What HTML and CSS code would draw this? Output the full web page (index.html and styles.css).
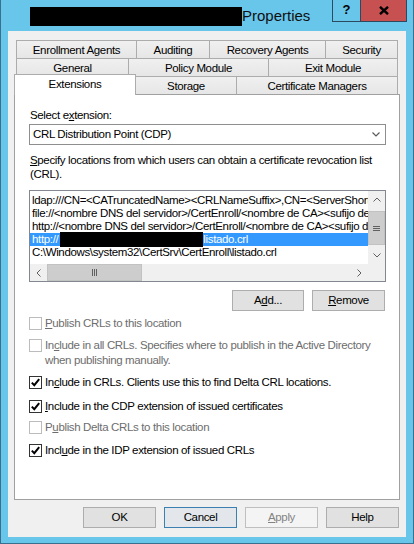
FILE: index.html
```html
<!DOCTYPE html>
<html>
<head>
<meta charset="utf-8">
<title>Properties</title>
<link rel="stylesheet" href="styles.css">
</head>
<body>
<div class="window">
  <div class="titlebar">
    <span class="title-redact"></span>
    <span class="title">Properties</span>
    <div class="caption-btns">
      <div class="cap cap-help">?</div>
      <div class="cap cap-close">
        <svg width="10" height="9" viewBox="0 0 10 9"><path d="M1 0.8 L9 8.2 M9 0.8 L1 8.2" stroke="#000" stroke-width="2.4" fill="none"/></svg>
      </div>
    </div>
  </div>
  <div class="client">
    <div class="tabs">
      <div class="tabrow">
        <div class="tab w121">Enrollment Agents</div>
        <div class="tab w74">Auditing</div>
        <div class="tab w117">Recovery Agents</div>
        <div class="tab w73">Security</div>
      </div>
      <div class="tabrow">
        <div class="tab w113">General</div>
        <div class="tab w141">Policy Module</div>
        <div class="tab w130">Exit Module</div>
      </div>
      <div class="tabrow">
        <div class="tab active w122">Extensions</div>
        <div class="tab w102">Storage</div>
        <div class="tab w162">Certificate Managers</div>
      </div>
    </div>
    <div class="panel">
      <div class="lbl">Select e<u>x</u>tension:</div>
      <div class="combo">
        <span>CRL Distribution Point (CDP)</span>
        <svg class="combo-arrow" width="8" height="5" viewBox="0 0 8 5"><path d="M0.5 0.5 L4 4 L7.5 0.5" stroke="#5a5a5a" stroke-width="1.2" fill="none"/></svg>
      </div>
      <div class="desc"><u>S</u>pecify locations from which users can obtain a certificate revocation list<br>(CRL).</div>
      <div class="listbox">
        <div class="lb-main">
          <div class="lb-rows">
            <div class="lb-row">ldap:///CN=&lt;CATruncatedName&gt;&lt;CRLNameSuffix&gt;,CN=&lt;ServerShortName&gt;,CN=CDP,CN=Public Key Services,CN=Services,&lt;ConfigurationContainer&gt;</div>
            <div class="lb-row">file://&lt;nombre DNS del servidor&gt;/CertEnroll/&lt;nombre de CA&gt;&lt;sufijo de nombre de CRL&gt;&lt;diferencia de CRL&gt;.crl</div>
            <div class="lb-row">http://&lt;nombre DNS del servidor&gt;/CertEnroll/&lt;nombre de CA&gt;&lt;sufijo de nombre de CRL&gt;&lt;diferencia de CRL&gt;.crl</div>
            <div class="lb-row sel">http://<span class="row-redact"></span>listado.crl</div>
            <div class="lb-row">C:\Windows\system32\CertSrv\CertEnroll\listado.crl</div>
          </div>
          <div class="vscroll">
            <div class="sb-btn"><svg width="8" height="5" viewBox="0 0 8 5"><path d="M0.5 4.5 L4 1 L7.5 4.5" stroke="#606060" stroke-width="1" fill="none"/></svg></div>
            <div class="vtrack">
              <div class="vthumb"><svg width="7" height="5" viewBox="0 0 7 5"><path d="M0 0.5 H7 M0 2.5 H7 M0 4.5 H7" stroke="#606060" stroke-width="1"/></svg></div>
            </div>
            <div class="sb-btn"><svg width="8" height="5" viewBox="0 0 8 5"><path d="M0.5 0.5 L4 4 L7.5 0.5" stroke="#606060" stroke-width="1" fill="none"/></svg></div>
          </div>
        </div>
        <div class="hscroll-row">
          <div class="hscroll">
            <div class="sb-btn"><svg width="5" height="8" viewBox="0 0 5 8"><path d="M4.5 0.5 L1 4 L4.5 7.5" stroke="#606060" stroke-width="1" fill="none"/></svg></div>
            <div class="hthumb"><svg width="5" height="7" viewBox="0 0 5 7"><path d="M0.5 0 V7 M2.5 0 V7 M4.5 0 V7" stroke="#606060" stroke-width="1"/></svg></div>
            <div class="htrack"></div>
            <div class="sb-btn"><svg width="5" height="8" viewBox="0 0 5 8"><path d="M0.5 0.5 L4 4 L0.5 7.5" stroke="#606060" stroke-width="1" fill="none"/></svg></div>
          </div>
          <div class="corner"></div>
        </div>
      </div>
      <div class="list-buttons">
        <div class="btn w72">A<u>d</u>d...</div>
        <div class="btn w73"><u>R</u>emove</div>
      </div>
      <div class="chk dis m5"><span class="box"></span><span><u>P</u>ublish CRLs to this location</span></div>
      <div class="chk dis m7"><span class="box"></span><span>In<u>c</u>lude in all CRLs. Specifies where to publish in the Active Directory<br>when publishing manually.</span></div>
      <div class="chk m7"><span class="box"><svg width="11" height="11" viewBox="0 0 11 11"><path d="M1.8 5.6 L4.3 8.2 L9.2 2.2" stroke="#000" stroke-width="2" fill="none"/></svg></span><span>In<u>c</u>lude in CRLs. Clients use this to find Delta CRL locations.</span></div>
      <div class="chk m9"><span class="box"><svg width="11" height="11" viewBox="0 0 11 11"><path d="M1.8 5.6 L4.3 8.2 L9.2 2.2" stroke="#000" stroke-width="2" fill="none"/></svg></span><span><u>I</u>nclude in the CDP extension of issued certificates</span></div>
      <div class="chk dis m6"><span class="box"></span><span>P<u>u</u>blish Delta CRLs to this location</span></div>
      <div class="chk m8"><span class="box"><svg width="11" height="11" viewBox="0 0 11 11"><path d="M1.8 5.6 L4.3 8.2 L9.2 2.2" stroke="#000" stroke-width="2" fill="none"/></svg></span><span>Incl<u>u</u>de in the IDP extension of issued CRLs</span></div>
    </div>
    <div class="dlg-buttons">
      <div class="btn w73">OK</div>
      <div class="btn w73 default">Cancel</div>
      <div class="btn w73 disabled"><u>A</u>pply</div>
      <div class="btn w73">Help</div>
    </div>
  </div>
</div>
</body>
</html>
```

FILE: styles.css
```css
* { box-sizing: border-box; }
html, body { margin: 0; padding: 0; }
body {
  width: 414px;
  height: 544px;
  overflow: hidden;
  font-family: "Liberation Sans", Arial, sans-serif;
  font-size: 11.5px;
  letter-spacing: -0.35px;
  color: #000;
  background: #fff;
}
u { text-decoration: underline; text-underline-offset: 1px; }

.window {
  width: 414px;
  height: 544px;
  background: #68c6eb;
  border: 1px solid #3b6f8e;
  border-top: none;
  display: flex;
  flex-direction: column;
}

/* title bar */
.titlebar {
  height: 31px;
  flex: none;
  display: flex;
  align-items: flex-start;
  padding-left: 29px;
}
.title-redact {
  width: 212px;
  height: 19px;
  margin-top: 7px;
  background: #000;
}
.title {
  font-size: 15px;
  letter-spacing: 0;
  line-height: 19px;
  margin-top: 6px;
  color: #101010;
}
.caption-btns {
  margin-left: auto;
  margin-right: 6px;
  display: flex;
  height: 22px;
}
.cap {
  height: 22px;
  border-bottom: 1px solid #2b4a5f;
  border-right: 1px solid #2b4a5f;
  display: flex;
  align-items: center;
  justify-content: center;
}
.cap-help {
  width: 29px;
  border-left: 1px solid #2b4a5f;
  font-weight: bold;
  font-size: 13px;
  letter-spacing: 0;
  padding-bottom: 2px;
}
.cap-close {
  width: 46px;
  background: #c75050;
  padding-bottom: 1px;
}

/* client area */
.client {
  flex: 1;
  margin: 0 7px 6px 7px;
  background: #f0f0f0;
  padding: 9px 6px 0 6px;
  display: flex;
  flex-direction: column;
}

/* tabs */
.tabs {
  display: flex;
  flex-direction: column;
  padding-left: 2px;
}
.tabrow {
  display: flex;
  align-items: flex-start;
  height: 18px;
}
.tab {
  height: 18px;
  flex: none;
  border: 1px solid #acacac;
  border-bottom: none;
  margin-left: -1px;
  background: linear-gradient(#f0f0f0, #e6e6e6);
  display: flex;
  align-items: center;
  justify-content: center;
  line-height: 14px;
  white-space: nowrap;
}
.tab:first-child { margin-left: 0; }
.tab.active {
  height: 21px;
  margin-top: -2px;
  margin-bottom: -1px;
  margin-left: -2px;
  background: #fff;
  padding-bottom: 3px;
  position: relative;
  z-index: 1;
}
.w121 { width: 121px; }
.w74 { width: 74px; }
.w117 { width: 117px; }
.w73 { width: 73px; }
.w72 { width: 72px; }
.w113 { width: 113px; }
.w141 { width: 141px; }
.w130 { width: 130px; }
.w122 { width: 122px; }
.w102 { width: 102px; }
.w162 { width: 162px; }

/* panel */
.panel {
  height: 406px;
  flex: none;
  border: 1px solid #a0a0a0;
  background: #fff;
  padding: 0 13px 0 14px;
  display: flex;
  flex-direction: column;
}
.lbl {
  margin-top: 13px;
  line-height: 15px;
  padding-left: 1px;
}
.combo {
  margin-top: 1px;
  height: 21px;
  border: 1px solid #8e8e8e;
  background: #fff;
  display: flex;
  align-items: center;
  padding-left: 3px;
  padding-bottom: 1px;
}
.combo-arrow { margin-left: auto; margin-right: 5px; }
.desc {
  margin-top: 8px;
  line-height: 14px;
  padding-left: 1px;
}

/* list box */
.listbox {
  margin-top: 9px;
  height: 92px;
  border: 1px solid #828790;
  background: #fff;
  display: flex;
  flex-direction: column;
}
.lb-main {
  display: flex;
  height: 73px;
}
.lb-rows {
  flex: 1;
  min-width: 0;
  overflow: hidden;
  padding-top: 3px;
  white-space: nowrap;
}
.lb-row {
  height: 13px;
  line-height: 13px;
  padding-left: 2px;
}
.lb-row.sel {
  background: #3399ff;
  color: #fff;
}
.row-redact {
  display: inline-block;
  width: 143px;
  height: 15px;
  margin: -1px 0 -1px 2px;
  vertical-align: top;
  background: #000;
}
.vscroll {
  width: 17px;
  flex: none;
  display: flex;
  flex-direction: column;
  background: #f0f0f0;
}
.sb-btn {
  width: 17px;
  height: 17px;
  flex: none;
  display: flex;
  align-items: center;
  justify-content: center;
  background: #f0f0f0;
}
.vtrack {
  flex: 1;
  display: flex;
  flex-direction: column;
  align-items: center;
}
.vthumb {
  width: 17px;
  height: 34px;
  margin-top: 3px;
  background: #cdcdcd;
  border: 1px solid #c2c2c2;
  display: flex;
  align-items: center;
  justify-content: center;
}
.hscroll-row {
  display: flex;
  height: 17px;
}
.hscroll {
  flex: 1;
  display: flex;
  background: #f0f0f0;
}
.hthumb {
  width: 95px;
  height: 17px;
  background: #cdcdcd;
  border: 1px solid #c2c2c2;
  display: flex;
  align-items: center;
  justify-content: center;
}
.htrack { flex: 1; }
.corner {
  width: 17px;
  background: #f0f0f0;
}

/* buttons */
.btn {
  height: 21px;
  flex: none;
  background: #e1e1e1;
  border: 1px solid #adadad;
  display: flex;
  align-items: center;
  justify-content: center;
  padding-bottom: 1px;
}
.btn.default {
  border-color: #3c7fb1;
  background: #e3e7eb;
}
.btn.disabled {
  background: #f4f4f4;
  border-color: #bfbfbf;
  color: #838383;
}
.list-buttons {
  margin-top: 8px;
  display: flex;
  justify-content: flex-end;
  gap: 8px;
  padding-right: 1px;
}
.dlg-buttons {
  margin-top: 7px;
  display: flex;
  justify-content: flex-end;
  gap: 8px;
  padding-right: 1px;
}

/* checkboxes */
.chk {
  display: flex;
  align-items: flex-start;
  line-height: 15px;
}
.chk .box {
  width: 13px;
  height: 13px;
  flex: none;
  margin-top: 1px;
  margin-right: 3px;
  border: 1px solid #333;
  background: #fff;
  display: flex;
  align-items: center;
  justify-content: center;
}
.chk.dis { color: #6d6d6d; }
.chk.dis .box { border-color: #bcbcbc; }
.m5 { margin-top: 5px; }
.m6 { margin-top: 6px; }
.m7 { margin-top: 7px; }
.m8 { margin-top: 8px; }
.m9 { margin-top: 9px; }
```
